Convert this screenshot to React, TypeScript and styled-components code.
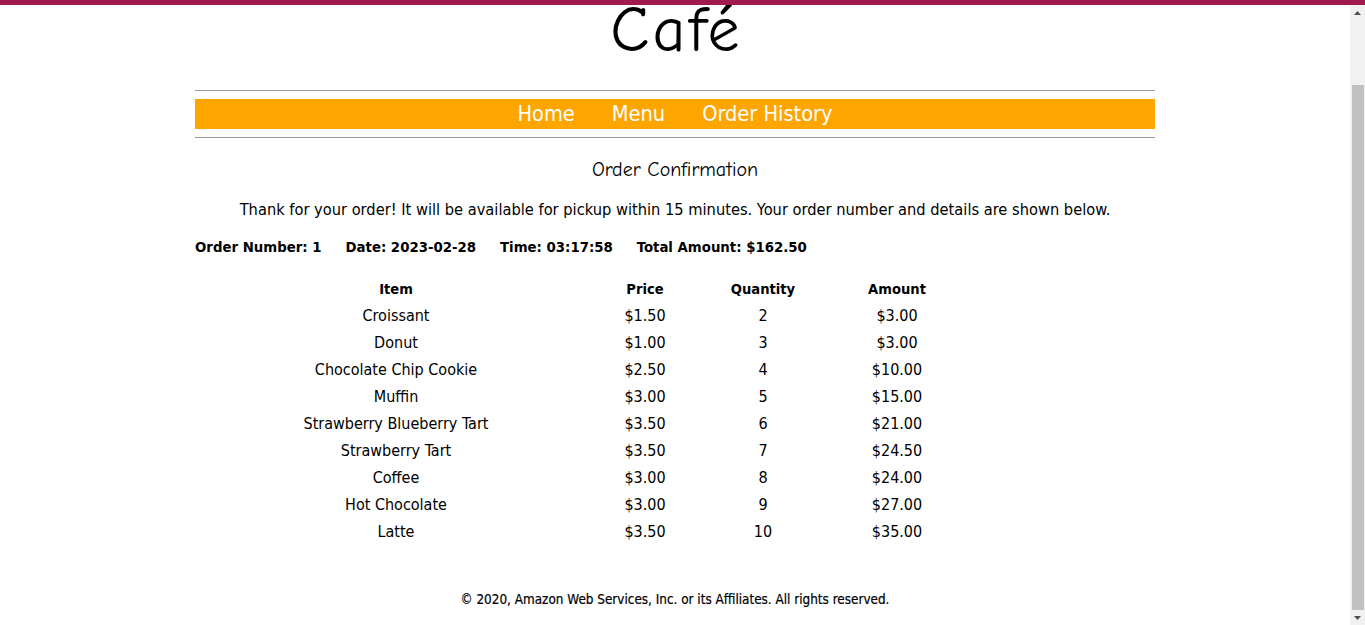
import React, { useLayoutEffect, useRef, useState } from "react";
import styled, { createGlobalStyle } from "styled-components";

const GlobalStyle = createGlobalStyle`
  html, body { margin: 0; padding: 0; height: 100%; overflow: hidden; background: #fff; }
  #root { height: 100%; }
`;

const BODY_FONT = `"Lucida Grande", "Lucida Sans Unicode", "DejaVu Sans Condensed", "DejaVu Sans", sans-serif`;
const TITLE_FONT = `"Comic Sans MS", "Comic Neue", "Open Sans", sans-serif`;

const Frame = styled.div`
  display: flex;
  flex-direction: column;
  height: 100%;
  border-top: 5px solid #a01a4e;
  box-sizing: border-box;
`;

const Viewport = styled.div`
  flex: 1;
  min-height: 0;
  display: flex;
`;

const Scroller = styled.div`
  flex: 1;
  overflow-y: scroll;
  scrollbar-width: none;
  font-family: ${BODY_FONT};
  color: #000;
  &::-webkit-scrollbar { display: none; }
`;

const ScrollBar = styled.div`
  width: 15px;
  flex: none;
  background: #f1f1f1;
  display: flex;
  flex-direction: column;
`;

const ScrollButton = styled.div`
  height: 15px;
  flex: none;
  display: flex;
  align-items: center;
  justify-content: center;
`;

const Track = styled.div`
  flex: 1;
  position: relative;
`;

const Thumb = styled.div`
  position: absolute;
  left: 2px;
  right: 1px;
  background: #c1c1c1;
`;

const Page = styled.div`
  width: 960px;
  margin: 0 auto;
  padding: 77px 0 16px;
  display: flex;
  flex-direction: column;
`;

const Title = styled.h1`
  margin: 0;
  font-family: ${TITLE_FONT};
  font-weight: normal;
  font-size: 64px;
  line-height: 50px;
  letter-spacing: 3px;
  text-indent: 3px;
  text-align: center;
`;

const Rule = styled.div<{ $top: number }>`
  height: 1px;
  background: #9a9a9a;
  margin-top: ${(p) => p.$top}px;
`;

const Nav = styled.nav`
  margin: 8px 0;
  height: 30px;
  background: #ffa500;
  display: flex;
  justify-content: center;
  align-items: center;
  gap: 37px;
`;

const NavLink = styled.a`
  color: #fff;
  font-size: 21.6px;
  text-decoration: none;
  line-height: 30px;
`;

const Heading = styled.h2`
  margin: 20px 0 0;
  font-family: ${TITLE_FONT};
  font-weight: normal;
  font-size: 20px;
  line-height: 24px;
  text-align: center;
`;

const Message = styled.p`
  margin: 18px 0 0;
  font-size: 16.3px;
  line-height: 20px;
  text-align: center;
`;

const InfoRow = styled.div`
  margin-top: 17px;
  display: flex;
  gap: 24px;
  font-weight: bold;
  font-size: 14.8px;
  line-height: 20px;
`;

const Table = styled.div`
  margin: 18px 0 0 101px;
  display: grid;
  grid-template-columns: 300px 98px 138px 130px;
  grid-auto-rows: 27px;
  font-size: 16px;
`;

const Cell = styled.div<{ $head?: boolean; $first?: boolean }>`
  display: flex;
  align-items: center;
  justify-content: center;
  font-weight: ${(p) => (p.$head ? "bold" : "normal")};
  font-size: ${(p) => (p.$head ? "14.6px" : "16px")};
  padding-right: ${(p) => (p.$first ? "100px" : "0")};
  white-space: nowrap;
`;

const Footer = styled.footer`
  margin-top: 46px;
  font-size: 13.4px;
  line-height: 18px;
  text-align: center;
  -webkit-text-stroke: 0.2px #000;
`;

const items: [string, string, number, string][] = [
  ["Croissant", "$1.50", 2, "$3.00"],
  ["Donut", "$1.00", 3, "$3.00"],
  ["Chocolate Chip Cookie", "$2.50", 4, "$10.00"],
  ["Muffin", "$3.00", 5, "$15.00"],
  ["Strawberry Blueberry Tart", "$3.50", 6, "$21.00"],
  ["Strawberry Tart", "$3.50", 7, "$24.50"],
  ["Coffee", "$3.00", 8, "$24.00"],
  ["Hot Chocolate", "$3.00", 9, "$27.00"],
  ["Latte", "$3.50", 10, "$35.00"],
];

const Arrow = ({ down }: { down?: boolean }) => (
  <svg width="7" height="4" viewBox="0 0 7 4">
    <path d={down ? "M0 0 H7 L3.5 4 Z" : "M0 4 H7 L3.5 0 Z"} fill="#505050" />
  </svg>
);

export default function App() {
  const ref = useRef<HTMLDivElement>(null);
  const [thumb, setThumb] = useState({ top: 65, height: 525 });
  useLayoutEffect(() => {
    const el = ref.current;
    if (!el) return;
    el.scrollTop = el.scrollHeight;
    const track = el.clientHeight - 30;
    setThumb({
      top: (el.scrollTop / el.scrollHeight) * track,
      height: (el.clientHeight / el.scrollHeight) * track,
    });
  }, []);
  return (
    <>
      <GlobalStyle />
      <Frame>
        <Viewport>
          <Scroller ref={ref}>
            <Page>
              <Title>Café</Title>
              <Rule $top={35} />
              <Nav>
                <NavLink href="#">Home</NavLink>
                <NavLink href="#">Menu</NavLink>
                <NavLink href="#">Order History</NavLink>
              </Nav>
              <Rule $top={0} />
              <Heading>Order Confirmation</Heading>
              <Message>
                Thank for your order! It will be available for pickup within 15 minutes. Your order number and details are shown below.
              </Message>
              <InfoRow>
                <span>Order Number: 1</span>
                <span>Date: 2023-02-28</span>
                <span>Time: 03:17:58</span>
                <span>Total Amount: $162.50</span>
              </InfoRow>
              <Table>
                <Cell $head $first>Item</Cell>
                <Cell $head>Price</Cell>
                <Cell $head>Quantity</Cell>
                <Cell $head>Amount</Cell>
                {items.map(([name, price, qty, amount]) => (
                  <React.Fragment key={name}>
                    <Cell $first>{name}</Cell>
                    <Cell>{price}</Cell>
                    <Cell>{qty}</Cell>
                    <Cell>{amount}</Cell>
                  </React.Fragment>
                ))}
              </Table>
              <Footer>© 2020, Amazon Web Services, Inc. or its Affiliates. All rights reserved.</Footer>
            </Page>
          </Scroller>
          <ScrollBar>
            <ScrollButton><Arrow /></ScrollButton>
            <Track>
              <Thumb style={{ top: thumb.top, height: thumb.height }} />
            </Track>
            <ScrollButton><Arrow down /></ScrollButton>
          </ScrollBar>
        </Viewport>
      </Frame>
    </>
  );
}
